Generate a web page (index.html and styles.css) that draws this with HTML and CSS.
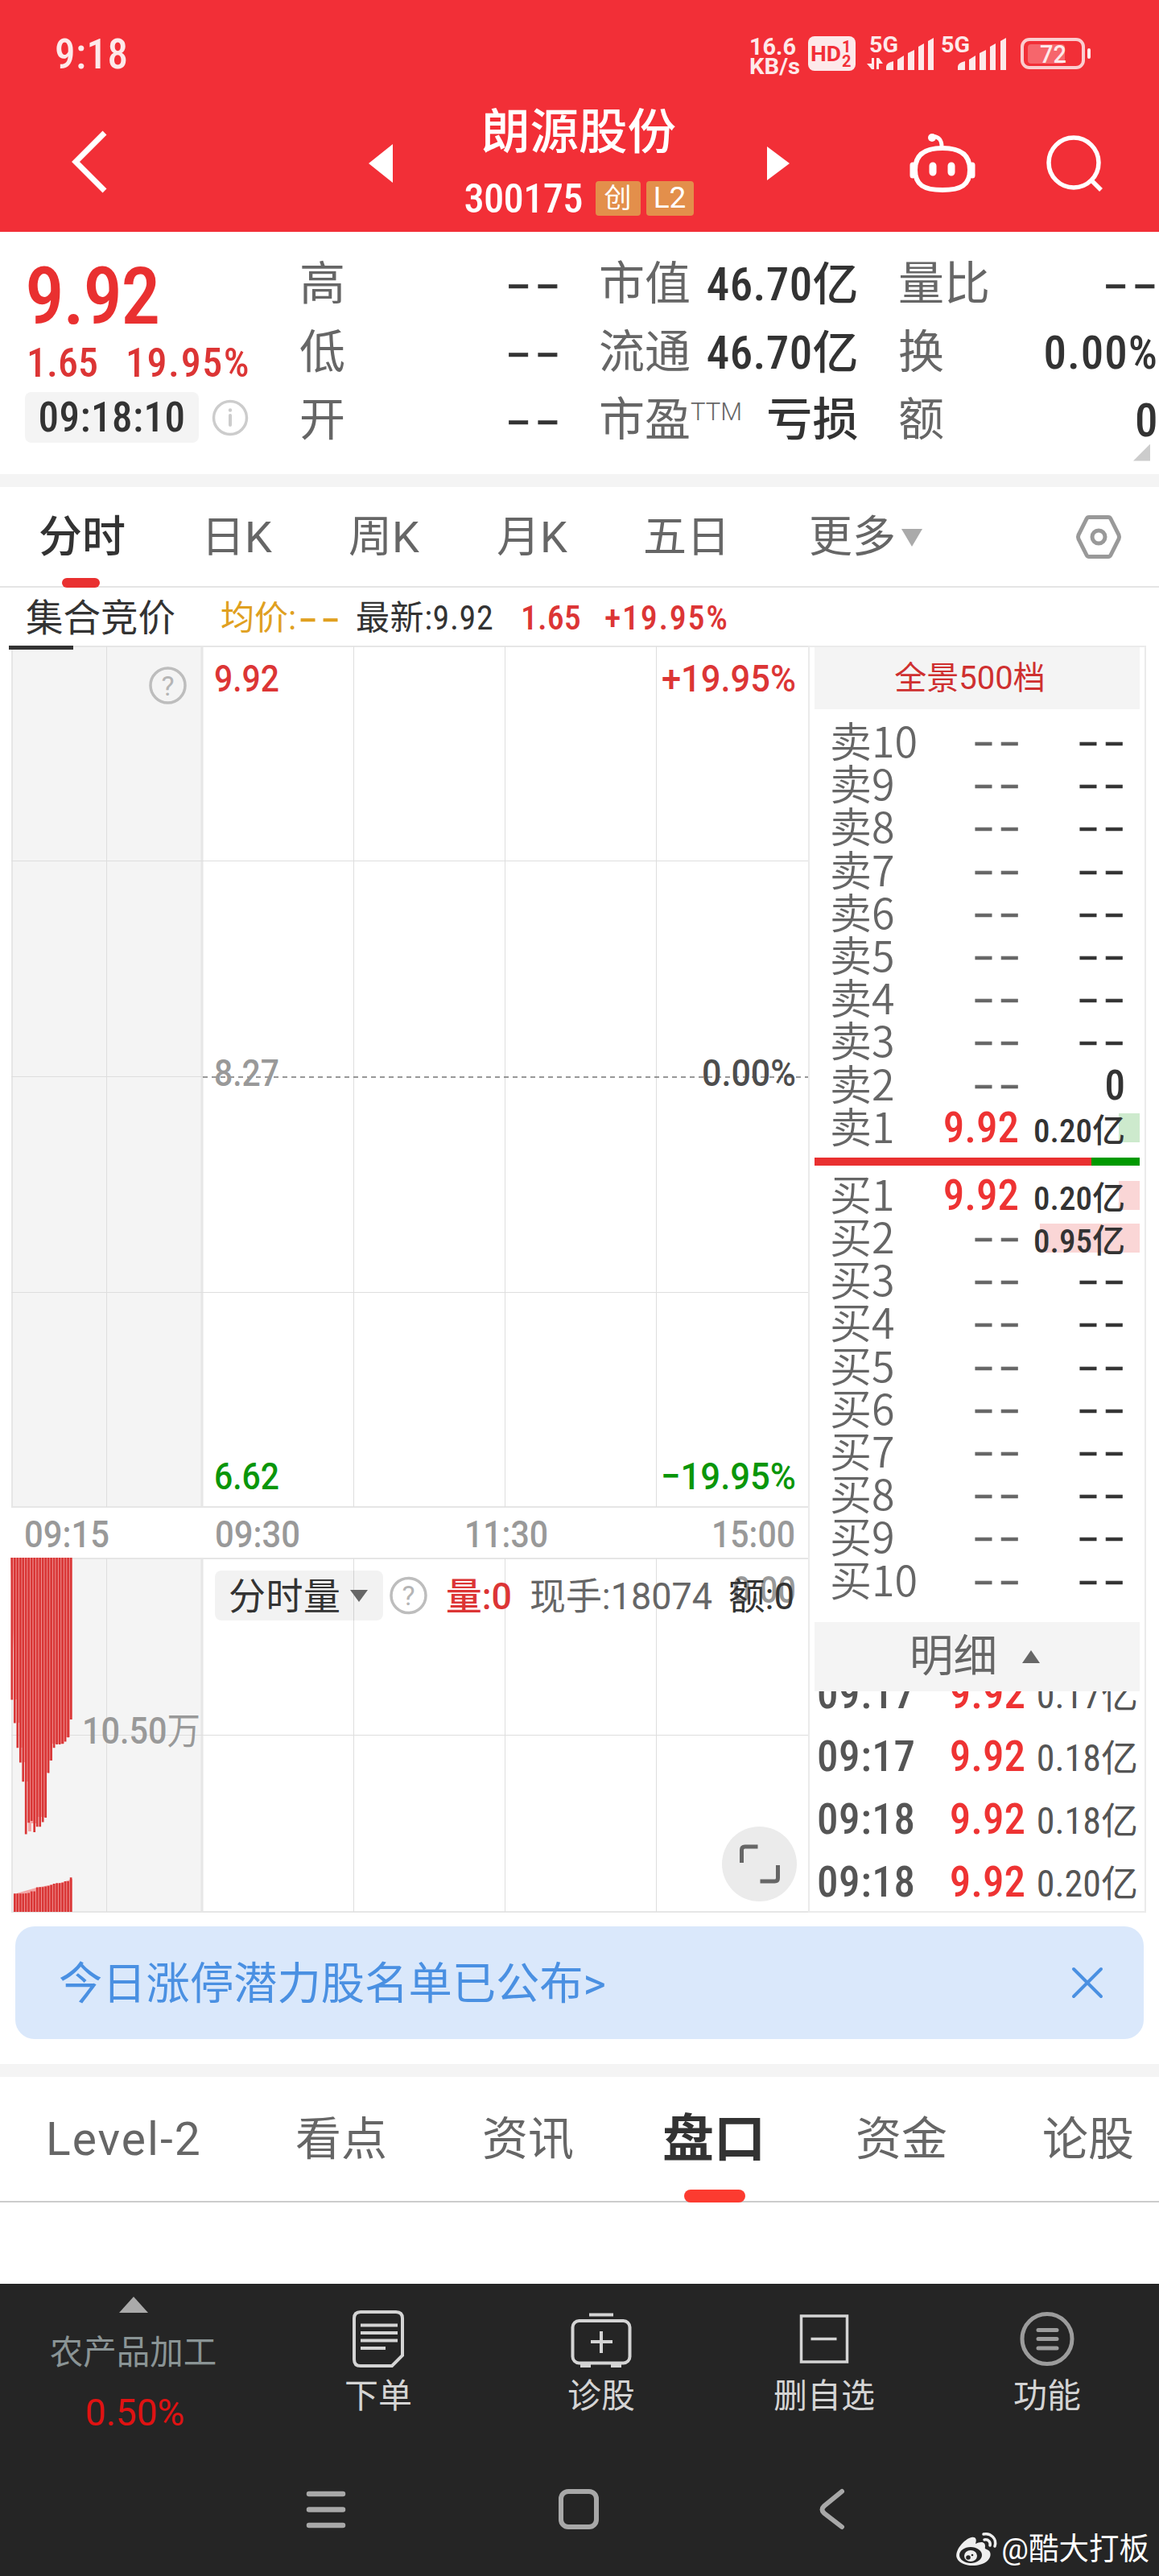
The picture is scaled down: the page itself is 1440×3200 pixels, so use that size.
FILE: index.html
```html
<!DOCTYPE html>
<html lang="zh-CN">
<head>
<meta charset="utf-8">
<title>朗源股份 300175</title>
<link rel="stylesheet" href="styles.css">
</head>
<body>
<div class="app">
  <header class="header">
    <div class="status">
      <span class="clock">9:18</span>
      <svg class="status-icons" width="426" height="52" viewBox="930 42 426 52" fill="#fde9ea">
        <g font-weight="700">
          <text x="931" y="68" font-size="30" textLength="58" lengthAdjust="spacingAndGlyphs">16.6</text>
          <text x="931" y="92" font-size="28" textLength="63" lengthAdjust="spacingAndGlyphs">KB/s</text>
        </g>
        <rect x="1004" y="45" width="59" height="43" rx="8"/>
        <g fill="#f22f37" font-weight="700">
          <text x="1007" y="76" font-size="26" textLength="38" lengthAdjust="spacingAndGlyphs">HD</text>
          <text x="1046" y="65" font-size="20">1</text>
          <text x="1046" y="83" font-size="20">2</text>
        </g>
        <g font-weight="700" font-size="27">
          <text x="1080" y="65" textLength="36" lengthAdjust="spacingAndGlyphs">5G</text>
          <text x="1169" y="65" textLength="36" lengthAdjust="spacingAndGlyphs">5G</text>
        </g>
        <path d="M1083 72h3v14h-3l-6-7h6zM1089 86V72h3l5 7h-5v7z"/>
        <path d="M1101 87v-4q0-5 9-7v11zM1115 87V74l8-5v18zM1128 87V66l8-4v25zM1141 87V58l7-4v33zM1153 87V51l7-4v40z"/>
        <path d="M1190 87v-4q0-5 9-7v11zM1204 87V74l8-5v18zM1217 87V66l8-4v25zM1230 87V58l7-4v33zM1243 87V51l7-4v40z"/>
        <rect x="1270" y="49" width="76" height="35" rx="9" fill="none" stroke="#fbcdcf" stroke-width="4"/>
        <rect x="1277" y="55" width="46" height="24" rx="4" fill="#f6666c"/>
        <rect x="1351" y="60" width="4" height="13" rx="2"/>
        <text x="1292" y="78" font-size="31" font-weight="500" textLength="33" lengthAdjust="spacingAndGlyphs">72</text>
      </svg>
    </div>
    <div class="nav">
      <svg class="back" width="50" height="84" viewBox="86 160 50 84" fill="none" stroke="#fff" stroke-width="7"><path d="M130 165L94 201l36 36"/></svg>
      <svg class="prev" width="30" height="48" viewBox="0 0 30 48" fill="#fff"><path d="M30 0v48L0 24z"/></svg>
      <div class="stock">
        <div class="stock-name">朗源股份</div>
        <div class="stock-code"><span class="num code">300175</span><span class="badge">创</span><span class="badge l2">L2</span></div>
      </div>
      <svg class="next" width="28" height="42" viewBox="0 0 28 42" fill="#fff"><path d="M0 0v42l28-21z"/></svg>
      <svg class="robot" width="84" height="80" viewBox="1129 162 84 80" fill="none" stroke="#fff" stroke-width="6">
        <path d="M1171 184c-16 0-34 4-34 27 0 19 11 25 34 25s34-6 34-25c0-23-18-27-34-27z"/>
        <path d="M1170 182c0-9-4-12-11-13" stroke-width="5"/>
        <circle cx="1158" cy="171" r="5" fill="#fff" stroke="none"/>
        <path d="M1134 205v13M1208 205v13" stroke-width="7" stroke-linecap="round"/>
        <path d="M1159 206v8M1182 206v8" stroke-width="9" stroke-linecap="round"/>
      </svg>
      <svg class="search" width="76" height="76" viewBox="1298 166 76 76" fill="none" stroke="#fff" stroke-width="5.5"><circle cx="1334" cy="202" r="31"/><path d="M1355 223l13 13"/></svg>
    </div>
  </header>

  <section class="quote">
    <div class="price-col">
      <div class="num price">9.92</div>
      <div class="num change"><span>1.65</span><span>19.95%</span></div>
      <div class="time-row">
        <span class="num time-pill">09:18:10</span>
        <svg width="46" height="46" viewBox="0 0 46 46" fill="none" stroke="#ccc" stroke-width="3.5"><circle cx="23" cy="23" r="20.500"/><path d="M23 20v12" stroke-width="4" stroke-linecap="round"/><circle cx="23" cy="13.500" r="2.200" fill="#ccc" stroke="none"/></svg>
      </div>
    </div>
    <div class="stat-col">
      <div class="stat"><span>高</span><b class="dash">--</b></div>
      <div class="stat"><span>低</span><b class="dash">--</b></div>
      <div class="stat"><span>开</span><b class="dash">--</b></div>
    </div>
    <div class="stat-col">
      <div class="stat"><span>市值</span><b class="num">46.70亿</b></div>
      <div class="stat"><span>流通</span><b class="num">46.70亿</b></div>
      <div class="stat"><span>市盈<sup>TTM</sup></span><b class="word">亏损</b></div>
    </div>
    <div class="stat-col">
      <div class="stat"><span>量比</span><b class="dash">--</b></div>
      <div class="stat"><span>换</span><b class="num wide">0.00%</b></div>
      <div class="stat"><span>额</span><b class="num">0</b></div>
      <i class="corner"></i>
    </div>
  </section>

  <nav class="periods">
    <span class="on">分时</span><span>日K</span><span>周K</span><span>月K</span><span>五日</span>
    <span class="more">更多<svg width="26" height="22" viewBox="0 0 26 22" fill="#aaa"><path d="M0 0h26L13 22z"/></svg></span>
    <svg class="gear" width="58" height="56" viewBox="1336 639 58 56" fill="none" stroke="#999" stroke-width="5"><path d="M1353 642.500h24q2 0 3 2l10 20q1 2.500 0 5l-10 20q-1 2-3 2h-24q-2 0-3-2l-10-20q-1-2.500 0-5l10-20q1-2 3-2z"/><circle cx="1365" cy="667" r="8"/></svg>
  </nav>

  <div class="legend">
    <span class="lg-mode">集合竞价</span>
    <span class="num lg-avg">均价:<i class="dash">--</i></span>
    <span class="num lg-last">最新:9.92</span>
    <span class="num lg-chg">1.65</span>
    <span class="num lg-pct">+19.95%</span>
  </div>

  <main class="market">
    <svg class="chart" width="1004" height="1576" viewBox="0 802 1004 1576">
      <rect x="14" y="803" width="238" height="1069" fill="#f4f4f4"/>
      <rect x="14" y="1936" width="238" height="439" fill="#f4f4f4"/>
      <g stroke="#e6e6e6" fill="none" stroke-width="2">
        <path d="M14 803h990M14 1872h990M14 1936h990M14 2375h990M15 803v1069M15 1936v439"/>
        <path d="M251 803v1069M251 1936v439" stroke-width="3"/>
      </g>
      <g stroke="#dedede" stroke-width="1">
        <path d="M132.500 803v1069M439.500 803v1069M627.500 803v1069M815.500 803v1069M132.500 1936v439M439.500 1936v439M627.500 1936v439M815.500 1936v439"/>
        <path d="M14 1069.500h990M14 1605.500h990M14 1337.500h238M14 2155.500h990"/>
      </g>
      <path d="M252 1338h752" stroke="#777" stroke-width="1.500" stroke-dasharray="6 5"/>
      <rect x="11" y="802" width="80" height="5" fill="#333"/>
      <g font-size="47" font-weight="500">
        <text x="266" y="859" textLength="81" lengthAdjust="spacingAndGlyphs" fill="#dc3535">9.92</text>
        <text x="822" y="859" textLength="167" lengthAdjust="spacingAndGlyphs" fill="#dc3535">+19.95%</text>
        <text x="266" y="1349" textLength="81" lengthAdjust="spacingAndGlyphs" fill="#999">8.27</text>
        <text x="872" y="1349" textLength="117" lengthAdjust="spacingAndGlyphs" fill="#4d4d4d">0.00%</text>
        <text x="266" y="1850" textLength="81" lengthAdjust="spacingAndGlyphs" fill="#0a960a">6.62</text>
        <text x="821" y="1850" textLength="168" lengthAdjust="spacingAndGlyphs" fill="#0a960a">−19.95%</text>
      </g>
      <g font-size="46" fill="#999" font-weight="500">
        <text x="30" y="1922" textLength="106" lengthAdjust="spacingAndGlyphs">09:15</text>
        <text x="267" y="1922" textLength="106" lengthAdjust="spacingAndGlyphs">09:30</text>
        <text x="577" y="1922" textLength="104" lengthAdjust="spacingAndGlyphs">11:30</text>
        <text x="884" y="1922" textLength="104" lengthAdjust="spacingAndGlyphs">15:00</text>
        <text x="102" y="2166" textLength="147" lengthAdjust="spacingAndGlyphs">10.50<tspan font-weight="400">万</tspan></text>
        <text x="910" y="1991" textLength="79" lengthAdjust="spacingAndGlyphs">0.00</text>
      </g>
      <g fill="none" stroke="#bdbdbd" stroke-width="3.500">
        <circle cx="208.500" cy="851.500" r="21.500"/>
        <circle cx="507.500" cy="1982" r="21.500"/>
      </g>
      <g font-size="34" fill="#b5b5b5" text-anchor="middle"><text x="208.500" y="863.500">?</text><text x="507.500" y="1994">?</text></g>
      <rect x="267" y="1951" width="209" height="62" rx="8" fill="#000" fill-opacity=".05"/>
      <path d="M435 1975h22l-11 15z" fill="#666"/>
      <g font-size="46">
        <text x="284" y="1999" textLength="139" fill="#333">分时量</text>
        <text x="554" y="1999" textLength="82" lengthAdjust="spacingAndGlyphs" fill="#dc3535" font-weight="500">量:0</text>
        <text x="658" y="1999" textLength="227" lengthAdjust="spacingAndGlyphs" fill="#666">现手:18074</text>
        <text x="905" y="1999" textLength="82" lengthAdjust="spacingAndGlyphs" fill="#333">额:0</text>
      </g>
      <path fill="#f3a5a5" d="M13 1935h77v201h-3v22h-7v8h-17v21h-3v15h-3v55h-12v8h-6v10h-4V2213h-3v-24h-3v-18h-4v-31h-3v-29h-3zM17 2353l28-8 30-6 15-5v41H17z"/>
      <path stroke="#d93636" stroke-width="2.700" fill="none" d="M14.800 1935V2111.500M18.300 1935V2140.600M21.800 1935V2171.200M25.300 1935V2189.600M28.700 1935V2213.300M32.200 1935V2278.400M35.700 1935V2264.200M39.200 1935V2261.900M42.700 1935V2276M46.200 1935V2269.200M49.700 1935V2269.200M53.200 1935V2263.500M56.700 1935V2258M60.100 1935V2202.600M63.600 1935V2187M67.100 1935V2171.200M70.600 1935V2167M74.100 1935V2167M77.600 1935V2166.200M81.100 1935V2163.600M84.600 1935V2158.200M88.100 1935V2136M18.300 2375V2352.200M21.800 2375V2352.200M25.300 2375V2352.200M28.700 2375V2352.200M32.200 2375V2351.900M35.700 2375V2351.500M39.200 2375V2349.600M42.700 2375V2349.600M46.200 2375V2344.600M49.700 2375V2344.200M53.200 2375V2344.200M56.700 2375V2343.400M60.100 2375V2342.700M63.600 2375V2341.500M67.100 2375V2340M70.600 2375V2339.200M74.100 2375V2339.200M77.600 2375V2338.800M81.100 2375V2336.900M84.600 2375V2336.900M88.100 2375V2332.300"/>
      <circle cx="943.500" cy="2315.500" r="46.500" fill="#ebebeb"/>
      <path d="M921.500 2314v-16q0-4 4-4h16M966.500 2317v16q0 4-4 4h-18" fill="none" stroke="#666" stroke-width="5"/>
    </svg>

    <aside class="book">
      <div class="panorama">全景500档</div>
      <div class="rows sells">
        <div class="row"><span>卖10</span><em class="dash">--</em><b class="dash">--</b></div>
        <div class="row"><span>卖9</span><em class="dash">--</em><b class="dash">--</b></div>
        <div class="row"><span>卖8</span><em class="dash">--</em><b class="dash">--</b></div>
        <div class="row"><span>卖7</span><em class="dash">--</em><b class="dash">--</b></div>
        <div class="row"><span>卖6</span><em class="dash">--</em><b class="dash">--</b></div>
        <div class="row"><span>卖5</span><em class="dash">--</em><b class="dash">--</b></div>
        <div class="row"><span>卖4</span><em class="dash">--</em><b class="dash">--</b></div>
        <div class="row"><span>卖3</span><em class="dash">--</em><b class="dash">--</b></div>
        <div class="row"><span>卖2</span><em class="dash">--</em><b class="num big">0</b></div>
        <div class="row"><span>卖1</span><em class="num">9.92</em><b class="num">0.20亿</b><i class="depth g" style="width:26px"></i></div>
      </div>
      <div class="ratio"><i></i></div>
      <div class="rows buys">
        <div class="row"><span>买1</span><em class="num">9.92</em><b class="num">0.20亿</b><i class="depth" style="width:26px"></i></div>
        <div class="row"><span>买2</span><em class="dash">--</em><b class="num">0.95亿</b><i class="depth" style="width:124px"></i></div>
        <div class="row"><span>买3</span><em class="dash">--</em><b class="dash">--</b></div>
        <div class="row"><span>买4</span><em class="dash">--</em><b class="dash">--</b></div>
        <div class="row"><span>买5</span><em class="dash">--</em><b class="dash">--</b></div>
        <div class="row"><span>买6</span><em class="dash">--</em><b class="dash">--</b></div>
        <div class="row"><span>买7</span><em class="dash">--</em><b class="dash">--</b></div>
        <div class="row"><span>买8</span><em class="dash">--</em><b class="dash">--</b></div>
        <div class="row"><span>买9</span><em class="dash">--</em><b class="dash">--</b></div>
        <div class="row"><span>买10</span><em class="dash">--</em><b class="dash">--</b></div>
      </div>
      <div class="detail"><span>明细</span><svg width="22" height="16" viewBox="0 0 22 16" fill="#666"><path d="M0 16h22L11 0z"/></svg></div>
      <div class="ticks">
        <div class="tick num"><span>09:17</span><em>9.92</em><b>0.17亿</b></div>
        <div class="tick num"><span>09:17</span><em>9.92</em><b>0.18亿</b></div>
        <div class="tick num"><span>09:18</span><em>9.92</em><b>0.18亿</b></div>
        <div class="tick num"><span>09:18</span><em>9.92</em><b>0.20亿</b></div>
      </div>
    </aside>
  </main>

  <div class="banner">
    <span>今日涨停潜力股名单已公布&gt;</span>
    <svg width="38" height="38" viewBox="0 0 38 38" stroke="#4a90e2" stroke-width="4" stroke-linecap="round"><path d="M2 2l34 34M36 2L2 36"/></svg>
  </div>

  <nav class="sections">
    <span class="lv">Level-2</span><span>看点</span><span>资讯</span><span class="on">盘口</span><span>资金</span><span>论股</span>
  </nav>

  <footer class="footer">
    <div class="actions">
      <div class="sector">
        <svg width="36" height="20" viewBox="0 0 36 20" fill="#aaa"><path d="M0 20h36L18 0z"/></svg>
        <span class="sector-name">农产品加工</span>
        <span class="sector-pct">0.50%</span>
      </div>
      <div class="action">
        <svg width="66" height="74" viewBox="437 2869 66 74" fill="none" stroke="#d4d4d4" stroke-width="4"><path d="M448 2872h44q8 0 8 8v46l-13 13h-39q-8 0-8-8v-51q0-8 8-8z"/><path d="M448 2888.500h46M448 2898h46M448 2907.500h46M448 2917h31"/></svg>
        <span>下单</span>
      </div>
      <div class="action">
        <svg width="78" height="74" viewBox="708 2869 78 74" fill="none" stroke="#d4d4d4" stroke-width="4"><rect x="711.500" y="2883" width="71" height="52.500" rx="8"/><path d="M732 2875.500h30M747 2896v27M734 2909h27"/><path d="M721 2938.500h13M759 2938.500h13" stroke-width="5"/></svg>
        <span>诊股</span>
      </div>
      <div class="action">
        <svg width="62" height="74" viewBox="993.500 2869 62 74" fill="none" stroke="#d4d4d4" stroke-width="3.500"><rect x="996" y="2877" width="57" height="57"/><path d="M1008 2905.500h32"/></svg>
        <span>删自选</span>
      </div>
      <div class="action">
        <svg width="70" height="74" viewBox="1266 2869 70 74" fill="none" stroke="#9c9c9c" stroke-width="5"><circle cx="1301" cy="2905.500" r="31"/><path d="M1290 2894.500h23M1290 2905.500h23M1290 2917h23" stroke-linecap="round"/></svg>
        <span>功能</span>
      </div>
    </div>
    <div class="sysbar">
      <svg width="50" height="54" viewBox="380 3090 50 54" stroke="#a8a8a8" stroke-width="6.500" stroke-linecap="round"><path d="M384 3098h42M384 3117.500h42M384 3137h42"/></svg>
      <svg width="54" height="54" viewBox="692 3090 54 54" fill="none" stroke="#a8a8a8" stroke-width="6"><rect x="697" y="3095" width="44" height="44" rx="9"/></svg>
      <svg width="38" height="54" viewBox="1014 3090 38 54" fill="none" stroke="#a8a8a8" stroke-width="6" stroke-linecap="round"><path d="M1046 3095l-22 18q-5 4.500 0 9l22 17"/></svg>
    </div>
    <div class="watermark">
      <svg width="52" height="44" viewBox="1187 3142 52 44">
        <path fill="#eee" d="M1207 3150c5-1 7 2 5 8 6-3 12-3 12 3 0 2-1 3 2 4 6 2 6 9 1 14-10 9-33 8-38-3-4-9 9-24 18-26z"/>
        <ellipse cx="1206" cy="3172" rx="14" ry="10" fill="#252525"/>
        <ellipse cx="1206" cy="3173" rx="8" ry="7" fill="#eee"/>
        <circle cx="1203" cy="3175" r="2.800" fill="#252525"/><circle cx="1208" cy="3172" r="1.300" fill="#252525"/>
        <path d="M1222 3146c9-2 17 6 14 15M1223 3153c5-1 8 3 7 7" fill="none" stroke="#eee" stroke-width="3.500" stroke-linecap="round"/>
      </svg>
      <span>@酷大打板</span>
    </div>
  </footer>
</div>
</body>
</html>
```
FILE: styles.css
```css
* { box-sizing: border-box; }
body { margin: 0; background: #fff; }
svg { display: block; flex: none; overflow: visible; }
i, em { font-style: normal; }
.app {
  width: 1440px; height: 3200px; overflow: hidden;
  display: flex; flex-direction: column;
  font-family: Roboto, "Noto Sans CJK SC", sans-serif;
  color: #333; white-space: nowrap;
}
.num { font-stretch: 87%; font-weight: 500; }
.dash {
  display: inline-block; font-family: "Liberation Sans", sans-serif;
  font-weight: 400; letter-spacing: 3px; margin-right: -8px;
  transform: scaleX(1.65); transform-origin: right;
}

/* header */
.header { height: 288px; background: #f22f37; color: #fff; }
.status { height: 120px; display: flex; justify-content: space-between; padding: 42px 84px 0 68px; }
.clock { font-size: 51px; line-height: 51px; color: #fde9ea; font-stretch: 87%; font-weight: 500; letter-spacing: .5px; }
.nav { height: 168px; display: flex; align-items: flex-start; }
.back { margin: 40px 0 0 86px; }
.prev { margin: 59px 0 0 322px; }
.stock { width: 300px; margin: 0 0 0 81px; display: flex; flex-direction: column; align-items: center; }
.stock-name { font-size: 60.500px; line-height: 72px; font-weight: 500; margin-top: 9px; }
.stock-code { display: flex; align-items: center; margin-top: 23px; height: 44px; }
.code { font-size: 50.500px; line-height: 48px; width: 163px; letter-spacing: -.7px; padding-top: 1px; }
.badge { height: 43px; width: 56px; border-radius: 4px; background: #e38f4b; font-size: 34px; line-height: 42px; text-align: center; margin-right: 7px; }
.badge.l2 { width: 59px; margin-right: 0; font-size: 37px; }
.next { margin: 62px 0 0 84px; }
.robot { margin: 42px 0 0 148px; }
.search { margin: 46px 0 0 85px; }

/* quote */
.quote { height: 317px; border-bottom: 16px solid #f4f4f4; display: flex; }
.price-col { width: 372px; padding: 31px 0 0 31px; color: #dc3535; }
.price { font-size: 98px; line-height: 100px; height: 98px; color: #e93030; letter-spacing: -2px; }
.change { font-size: 50px; line-height: 68px; display: flex; gap: 34px; padding-left: 2px; }
.change span:last-child { letter-spacing: 1.600px; }
.time-row { display: flex; align-items: center; gap: 16px; margin-top: 2px; }
.time-pill { width: 216px; height: 63px; border-radius: 8px; background: #f4f4f4; color: #333; font-size: 51px; line-height: 63px; text-align: center; letter-spacing: .5px; }
.stat-col { width: 323px; margin-right: 49px; padding-top: 24px; }
.stat-col:last-child { margin-right: 0; }
.stat { display: flex; justify-content: space-between; font-size: 57px; line-height: 84.500px; height: 84.500px; color: #666; }
.stat span { line-height: 81px; }
.stat b { font-weight: 500; color: #333; letter-spacing: .4px; }
.stat b.wide { letter-spacing: 1px; }
.stat b.word { line-height: 81px; }
.stat b.dash { font-weight: 400; line-height: 78px; letter-spacing: 3px; margin-right: -6px; -webkit-text-stroke: .6px #333; }
.stat-col:last-child .dash { margin-right: -4px; }
.stat sup { font-size: 31px; line-height: 0; vertical-align: 19px; font-weight: 300; }
.corner { display: block; width: 21px; height: 21px; margin: -14px 0 0 292px; background: #ccc; clip-path: polygon(100% 0, 100% 100%, 0 100%); }

/* chart period tabs */
.periods { height: 125px; border-bottom: 2px solid #e5e5e5; display: grid; grid-template-columns: 202px 183px 184px 182px 206px 331px 1fr; padding-left: 48px; font-size: 54px; line-height: 125px; color: #666; }
.periods .on { color: #333; font-weight: 500; position: relative; }
.periods .on::after { content: ""; position: absolute; left: 29px; bottom: 0; width: 47px; height: 12px; border-radius: 6px; background: #e93030; }
.more { display: flex; align-items: center; gap: 7px; }
.gear { margin-top: 34px; }
.legend { height: 72px; line-height: 76px; font-size: 42px; display: grid; grid-template-columns: 242px 168px 205px 104px 1fr; padding-left: 32px; }
.lg-mode { font-size: 46.500px; }
.lg-avg { color: #e0a020; font-weight: 400; }
.lg-avg .dash { transform-origin: left; line-height: 60px; margin-left: 3px; -webkit-text-stroke: .6px #e0a020; }
.lg-last { font-weight: 400; letter-spacing: .6px; }
.lg-chg, .lg-pct { color: #dc3535; }
.lg-pct { letter-spacing: 1.700px; }

/* chart and order book */
.market { height: 1576px; display: flex; }
.chart { font-family: Roboto, "Noto Sans CJK SC", sans-serif; }
.book { width: 420px; height: 1574px; border: 2px solid #ebebeb; padding: 0 6px; display: flex; flex-direction: column; }
.panorama { height: 77px; background: #f4f4f4; color: #cf3030; font-size: 40px; line-height: 77px; text-align: center; padding-right: 18px; }
.rows { display: flex; flex-direction: column; }
.sells { margin-top: 15px; }
.buys { margin-top: 11px; }
.row { height: 53.200px; line-height: 53.200px; display: grid; grid-template-columns: 133px 104px 1fr; padding: 0 18px 0 19px; position: relative; }
.row span { font-family: "Noto Sans CJK SC", sans-serif; font-size: 52px; line-height: 45px; color: #666; font-weight: 350; }
.row em { font-size: 53px; color: #e33; text-align: right; font-stretch: 87%; padding-right: 2px; }
.row em.dash { color: #666; font-size: 50px; line-height: 48px; padding: 0; margin-right: -5px; -webkit-text-stroke: .5px #666; }
.row b { font-size: 41px; line-height: 60px; font-weight: 500; text-align: right; position: relative; z-index: 1; }
.buys .row b { line-height: 61px; }
.row b.dash, .buys .row b.dash { font-size: 50px; line-height: 48px; margin-right: -5px; font-weight: 400; -webkit-text-stroke: .5px #333; }
.row b.big { font-size: 51px; line-height: 53px; }
.depth { position: absolute; right: 0; top: 8px; height: 36px; background: #fad6d6; }
.depth.g { background: #cdeacd; }
.ratio { height: 10px; background: #090; margin-top: 10px; }
.ratio i { display: block; width: 344px; height: 10px; background: #e93030; }
.detail { height: 86px; margin-top: auto; background: #f4f4f4; color: #666; font-size: 54.500px; display: flex; align-items: center; justify-content: center; gap: 31px; padding-right: 6px; }
.detail span { line-height: 80px; margin-bottom: 3px; }
.ticks { height: 273px; overflow: hidden; display: flex; flex-direction: column; justify-content: flex-end; }
.tick { height: 78px; flex: none; line-height: 85px; display: grid; grid-template-columns: 140px 119px 1fr; padding: 0 2px 0 3px; font-size: 53px; color: #555; }
.tick span { letter-spacing: .6px; }
.tick em { color: #e33; text-align: right; }
.tick b { font-size: 46px; line-height: 88px; font-weight: 400; text-align: right; }

/* banner */
.banner { height: 140px; margin: 15px 19px 31px; border-radius: 24px; background: #dae8fb; color: #4a90e2; font-size: 54.300px; display: flex; align-items: center; justify-content: space-between; padding: 0 51px 0 54px; }
.banner span { margin-bottom: 8px; }

/* section tabs */
.sections { height: 172px; flex: none; border-top: 16px solid #f4f4f4; border-bottom: 2px solid #ccc; display: grid; grid-template-columns: 310px 232px 224px 240px 232px 1fr; padding-left: 57px; font-size: 57px; line-height: 156px; color: #666; }
.sections .lv { letter-spacing: 2px; }
.sections .on { color: #333; font-weight: 700; font-size: 64px; position: relative; }
.sections .on::after { content: ""; position: absolute; left: 27px; bottom: 0; width: 76px; height: 16px; border-radius: 8px; background: #fc3b30; }

/* footer */
.footer { height: 363px; margin-top: auto; background: #252525; position: relative; }
.actions { height: 230px; display: flex; }
.sector { width: 331px; display: flex; flex-direction: column; align-items: center; padding-top: 16px; }
.sector-name { font-size: 41.500px; line-height: 50px; margin-top: 25px; color: #8a9495; }
.sector-pct { font-size: 46px; line-height: 50px; margin-top: 24px; color: #e01212; padding-left: 4px; }
.action { width: 277px; display: flex; flex-direction: column; align-items: center; padding-top: 32px; color: #d4d4d4; font-size: 42px; line-height: 50px; }
.action span { margin: 9px 0 0 1px; }
.sysbar { display: flex; padding: 23px 0 0 380px; }
.sysbar svg:nth-child(2) { margin-left: 262px; }
.sysbar svg:nth-child(3) { margin-left: 268px; }
.watermark { position: absolute; right: 12px; bottom: 9px; display: flex; align-items: center; gap: 5px; color: #fff; font-size: 37.500px; line-height: 50px; }
```
